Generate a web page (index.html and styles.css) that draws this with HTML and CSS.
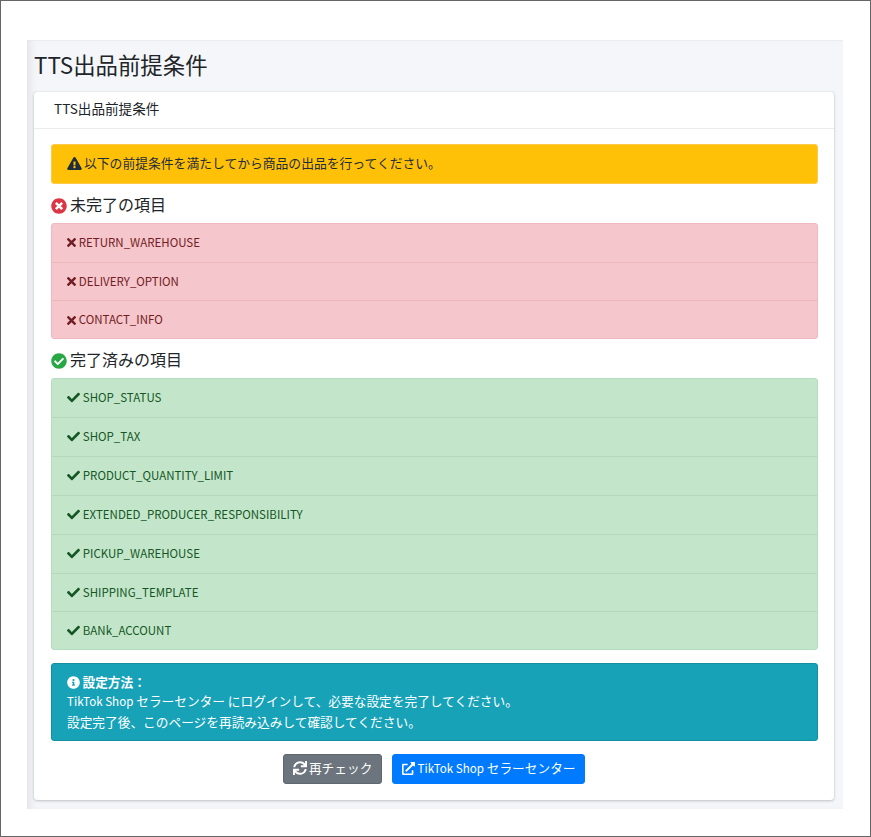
FILE: index.html
```html
<!DOCTYPE html>
<html lang="ja">
<head>
<meta charset="utf-8">
<title>TTS出品前提条件</title>
<link rel="stylesheet" href="styles.css">
</head>
<body>
<svg class="defs" width="0" height="0" aria-hidden="true">
  <symbol id="i-check" viewBox="0 0 512 512"><path d="M173.898 439.404l-166.4-166.4c-9.997-9.997-9.997-26.206 0-36.204l36.203-36.204c9.997-9.998 26.207-9.998 36.204 0L192 312.69 432.095 72.596c9.997-9.997 26.207-9.997 36.204 0l36.203 36.204c9.997 9.997 9.997 26.206 0 36.204l-294.4 294.401c-9.998 9.997-26.207 9.997-36.204-.001z"/></symbol>
  <symbol id="i-times" viewBox="0 0 352 512"><path d="M242.72 256l100.07-100.07c12.28-12.28 12.28-32.19 0-44.48l-22.24-22.24c-12.28-12.28-32.19-12.28-44.48 0L176 189.28 75.93 89.21c-12.28-12.28-32.19-12.28-44.48 0L9.21 111.45c-12.28 12.28-12.28 32.19 0 44.48L109.28 256 9.21 356.07c-12.28 12.28-12.28 32.19 0 44.48l22.24 22.24c12.28 12.28 32.2 12.28 44.48 0L176 322.72l100.07 100.07c12.28 12.28 32.2 12.28 44.48 0l22.24-22.24c12.28-12.28 12.28-32.19 0-44.48L242.72 256z"/></symbol>
  <symbol id="i-warn" viewBox="0 0 576 512"><path d="M569.517 440.013C587.975 472.007 564.806 512 527.94 512H48.054c-36.937 0-59.999-40.055-41.577-71.987L246.423 23.985c18.467-32.009 64.72-31.951 83.154 0l239.94 416.028zM288 354c-25.405 0-46 20.595-46 46s20.595 46 46 46 46-20.595 46-46-20.595-46-46-46zm-43.673-165.346l7.418 136c.347 6.364 5.609 11.346 11.982 11.346h48.546c6.373 0 11.635-4.982 11.982-11.346l7.418-136c.375-6.874-5.098-12.654-11.982-12.654h-63.383c-6.884 0-12.356 5.78-11.981 12.654z"/></symbol>
  <symbol id="i-times-circle" viewBox="0 0 512 512"><path d="M256 8C119 8 8 119 8 256s111 248 248 248 248-111 248-248S393 8 256 8zm121.6 313.1c4.7 4.7 4.7 12.3 0 17L338 377.6c-4.7 4.7-12.3 4.7-17 0L256 312l-65.1 65.6c-4.7 4.7-12.3 4.7-17 0L134.4 338c-4.7-4.7-4.7-12.3 0-17l65.6-65-65.6-65.1c-4.7-4.7-4.7-12.3 0-17l39.6-39.6c4.7-4.7 12.3-4.7 17 0l65 65.7 65.1-65.6c4.7-4.7 12.3-4.7 17 0l39.6 39.6c4.7 4.7 4.7 12.3 0 17L312 256l65.6 65.1z"/></symbol>
  <symbol id="i-check-circle" viewBox="0 0 512 512"><path d="M504 256c0 136.967-111.033 248-248 248S8 392.967 8 256 119.033 8 256 8s248 111.033 248 248zM227.314 387.314l184-184c6.248-6.248 6.248-16.379 0-22.627l-22.627-22.627c-6.248-6.249-16.379-6.249-22.628 0L216 308.118l-70.059-70.059c-6.248-6.248-16.379-6.248-22.628 0l-22.627 22.627c-6.248 6.248-6.248 16.379 0 22.627l104 104c6.249 6.249 16.379 6.249 22.628.001z"/></symbol>
  <symbol id="i-info" viewBox="0 0 512 512"><path d="M256 8C119.043 8 8 119.083 8 256c0 136.997 111.043 248 248 248s248-111.003 248-248C504 119.083 392.957 8 256 8zm0 110c23.196 0 42 18.804 42 42s-18.804 42-42 42-42-18.804-42-42 18.804-42 42-42zm56 254c0 6.627-5.373 12-12 12h-88c-6.627 0-12-5.373-12-12v-24c0-6.627 5.373-12 12-12h12v-64h-12c-6.627 0-12-5.373-12-12v-24c0-6.627 5.373-12 12-12h64c6.627 0 12 5.373 12 12v100h12c6.627 0 12 5.373 12 12v24z"/></symbol>
  <symbol id="i-sync" viewBox="0 0 512 512"><path d="M440.65 12.57l4 82.77A247.16 247.16 0 0 0 255.83 8C134.73 8 33.91 94.92 12.29 209.82A12 12 0 0 0 24.09 224h49.05a12 12 0 0 0 11.67-9.26 175.91 175.91 0 0 1 317-56.94l-101.46-4.86a12 12 0 0 0-12.57 12v47.41a12 12 0 0 0 12 12H500a12 12 0 0 0 12-12V12a12 12 0 0 0-12-12h-47.37a12 12 0 0 0-11.98 12.57zM255.83 432a175.61 175.61 0 0 1-146-77.8l101.8 4.87a12 12 0 0 0 12.57-12v-47.4a12 12 0 0 0-12-12H12a12 12 0 0 0-12 12V500a12 12 0 0 0 12 12h47.35a12 12 0 0 0 12-12.6l-4.15-82.57A247.17 247.17 0 0 0 255.83 504c121.11 0 221.93-86.92 243.55-201.82a12 12 0 0 0-11.8-14.18h-49.05a12 12 0 0 0-11.67 9.26A175.86 175.86 0 0 1 255.83 432z"/></symbol>
  <symbol id="i-ext" viewBox="0 0 512 512"><path d="M432,320H400a16,16,0,0,0-16,16V448H64V128H208a16,16,0,0,0,16-16V80a16,16,0,0,0-16-16H48A48,48,0,0,0,0,112V464a48,48,0,0,0,48,48H400a48,48,0,0,0,48-48V336A16,16,0,0,0,432,320ZM488,0h-128c-21.37,0-32.05,25.91-17,41l35.73,35.73L135,320.37a24,24,0,0,0,0,34L157.67,377a24,24,0,0,0,34,0L435.28,133.32,471,169c15,15,41,4.5,41-17V24A24,24,0,0,0,488,0Z"/></symbol>
</svg>
<div class="frame">
  <main class="panel">
    <h1 class="page-title">TTS出品前提条件</h1>
    <section class="card">
      <header class="card-header">TTS出品前提条件</header>
      <div class="card-body">
        <div class="alert alert-warning"><svg class="ico ico-warn"><use href="#i-warn"/></svg>以下の前提条件を満たしてから商品の出品を行ってください。</div>
        <h5 class="sub-title"><svg class="ico ico-head ico-red"><use href="#i-times-circle"/></svg>未完了の項目</h5>
        <ul class="list list-danger">
          <li class="list-item"><svg class="ico ico-times"><use href="#i-times"/></svg>RETURN_WAREHOUSE</li>
          <li class="list-item"><svg class="ico ico-times"><use href="#i-times"/></svg>DELIVERY_OPTION</li>
          <li class="list-item"><svg class="ico ico-times"><use href="#i-times"/></svg>CONTACT_INFO</li>
        </ul>
        <h5 class="sub-title sub-title-second"><svg class="ico ico-head ico-green"><use href="#i-check-circle"/></svg>完了済みの項目</h5>
        <ul class="list list-success">
          <li class="list-item"><svg class="ico ico-check"><use href="#i-check"/></svg>SHOP_STATUS</li>
          <li class="list-item"><svg class="ico ico-check"><use href="#i-check"/></svg>SHOP_TAX</li>
          <li class="list-item"><svg class="ico ico-check"><use href="#i-check"/></svg>PRODUCT_QUANTITY_LIMIT</li>
          <li class="list-item"><svg class="ico ico-check"><use href="#i-check"/></svg>EXTENDED_PRODUCER_RESPONSIBILITY</li>
          <li class="list-item"><svg class="ico ico-check"><use href="#i-check"/></svg>PICKUP_WAREHOUSE</li>
          <li class="list-item"><svg class="ico ico-check"><use href="#i-check"/></svg>SHIPPING_TEMPLATE</li>
          <li class="list-item"><svg class="ico ico-check"><use href="#i-check"/></svg>BANk_ACCOUNT</li>
        </ul>
        <div class="alert alert-info">
          <div class="info-title"><svg class="ico ico-info"><use href="#i-info"/></svg>設定方法：</div>
          <div><span class="latin">TikTok Shop</span> セラーセンター にログインして、必要な設定を完了してください。</div>
          <div>設定完了後、このページを再読み込みして確認してください。</div>
        </div>
        <div class="actions">
          <a class="btn btn-secondary"><svg class="ico ico-sync"><use href="#i-sync"/></svg>再チェック</a>
          <a class="btn btn-primary"><svg class="ico ico-ext"><use href="#i-ext"/></svg><span class="latin">TikTok Shop</span> セラーセンター</a>
        </div>
      </div>
    </section>
  </main>
</div>
</body>
</html>
```
FILE: styles.css
```css
* { box-sizing: border-box; }
html, body { margin: 0; padding: 0; }
body {
  font-family: "Noto Sans CJK JP", "Noto Sans", sans-serif;
  color: #212529;
  background: #fff;
}
.defs { position: absolute; }
.frame {
  height: 837px;
  border: 1px solid #666;
  padding: 39px 27px 27px 26px;
}
.panel {
  height: 769px;
  padding: 0 9px 8px 7px;
  background: #f4f6f9;
  box-shadow: inset 7px 0 6px -3px #e4e6ea, inset 0 1px 0 #eceef1;
}
.page-title {
  margin: 0;
  height: 52px;
  font-size: 22.4px;
  font-weight: 400;
  line-height: 49px;
  color: #212529;
}
.card {
  height: 708px;
  background: #fff;
  border-radius: 3px;
  box-shadow: 0 0 1px rgba(0,0,0,.2), 0 1px 3px rgba(0,0,0,.2);
}
.card-header {
  height: 37px;
  padding-left: 20px;
  font-size: 13.6px;
  line-height: 33.5px;
  border-bottom: 1px solid #ececee;
}
.card-body { padding: 15.2px 16.5px 0 17px; }
.alert {
  border-radius: 3px;
  border: 1px solid transparent;
  font-size: 12.8px;
  line-height: 19.2px;
}
.alert-warning {
  height: 39.8px;
  padding: 8px 15px;
  background: #ffc107;
  border-color: #ffc94a;
  color: #1f2d3d;
}
.alert-info {
  height: 77.4px;
  margin-top: 13px;
  padding: 7.6px 15px;
  font-size: 12.7px;
  line-height: 19.4px;
  background: #17a2b8;
  border-color: #148ea1;
  color: #fff;
}
.info-title { font-weight: 700; }
.latin { font-size: 11.6px; }
.ico { display: inline-block; fill: currentColor; vertical-align: -2px; }
.ico-warn { width: 15px; height: 13px; margin-right: 2px; color: #1f2d3d; }
.ico-head { width: 16px; height: 16px; margin-right: 3px; vertical-align: -3px; }
.ico-red { color: #dc3545; }
.ico-green { color: #28a745; }
.ico-times { width: 9px; height: 13px; margin-right: 3px; vertical-align: -2.5px; }
.ico-check { width: 13px; height: 13px; margin-right: 3px; }
.ico-info { width: 13px; height: 13px; margin-right: 2.5px; }
.ico-sync { width: 14px; height: 14px; margin-right: 2px; }
.ico-ext { width: 13px; height: 13px; margin-right: 3px; }
.sub-title {
  margin: 0;
  height: 38.7px;
  font-size: 16px;
  font-weight: 400;
  line-height: 40.5px;
}
.sub-title-second { height: 39px; line-height: 41.5px; }
.list {
  list-style: none;
  margin: 0;
  padding: 0;
  border-radius: 3px;
  border: 1px solid;
  font-size: 11.5px;
}
.list-item {
  height: 38.86px;
  line-height: 37px;
  padding-left: 14.8px;
  border-bottom: 1px solid;
}
.list-item:last-child { height: 36.86px; border-bottom: 0; }
.list-danger { background: #f5c6cb; color: #721c24; border-color: #efb9bf; }
.list-danger .list-item { border-color: #ebb6bc; }
.list-success { background: #c3e6cb; color: #155724; border-color: #b5dcbf; }
.list-success .list-item { border-color: #b3d8bb; }
.actions {
  display: flex;
  justify-content: center;
  gap: 10px;
  margin-top: 13.3px;
}
.btn {
  display: block;
  height: 29.6px;
  padding: 0 8.6px;
  border-radius: 3px;
  border: 1px solid;
  font-size: 12.7px;
  line-height: 25.5px;
  color: #fff;
  font-weight: 400;
}
.btn-secondary { background: #6c757d; border-color: #5f676e; }
.btn-primary { background: #007bff; border-color: #007bff; }
```
